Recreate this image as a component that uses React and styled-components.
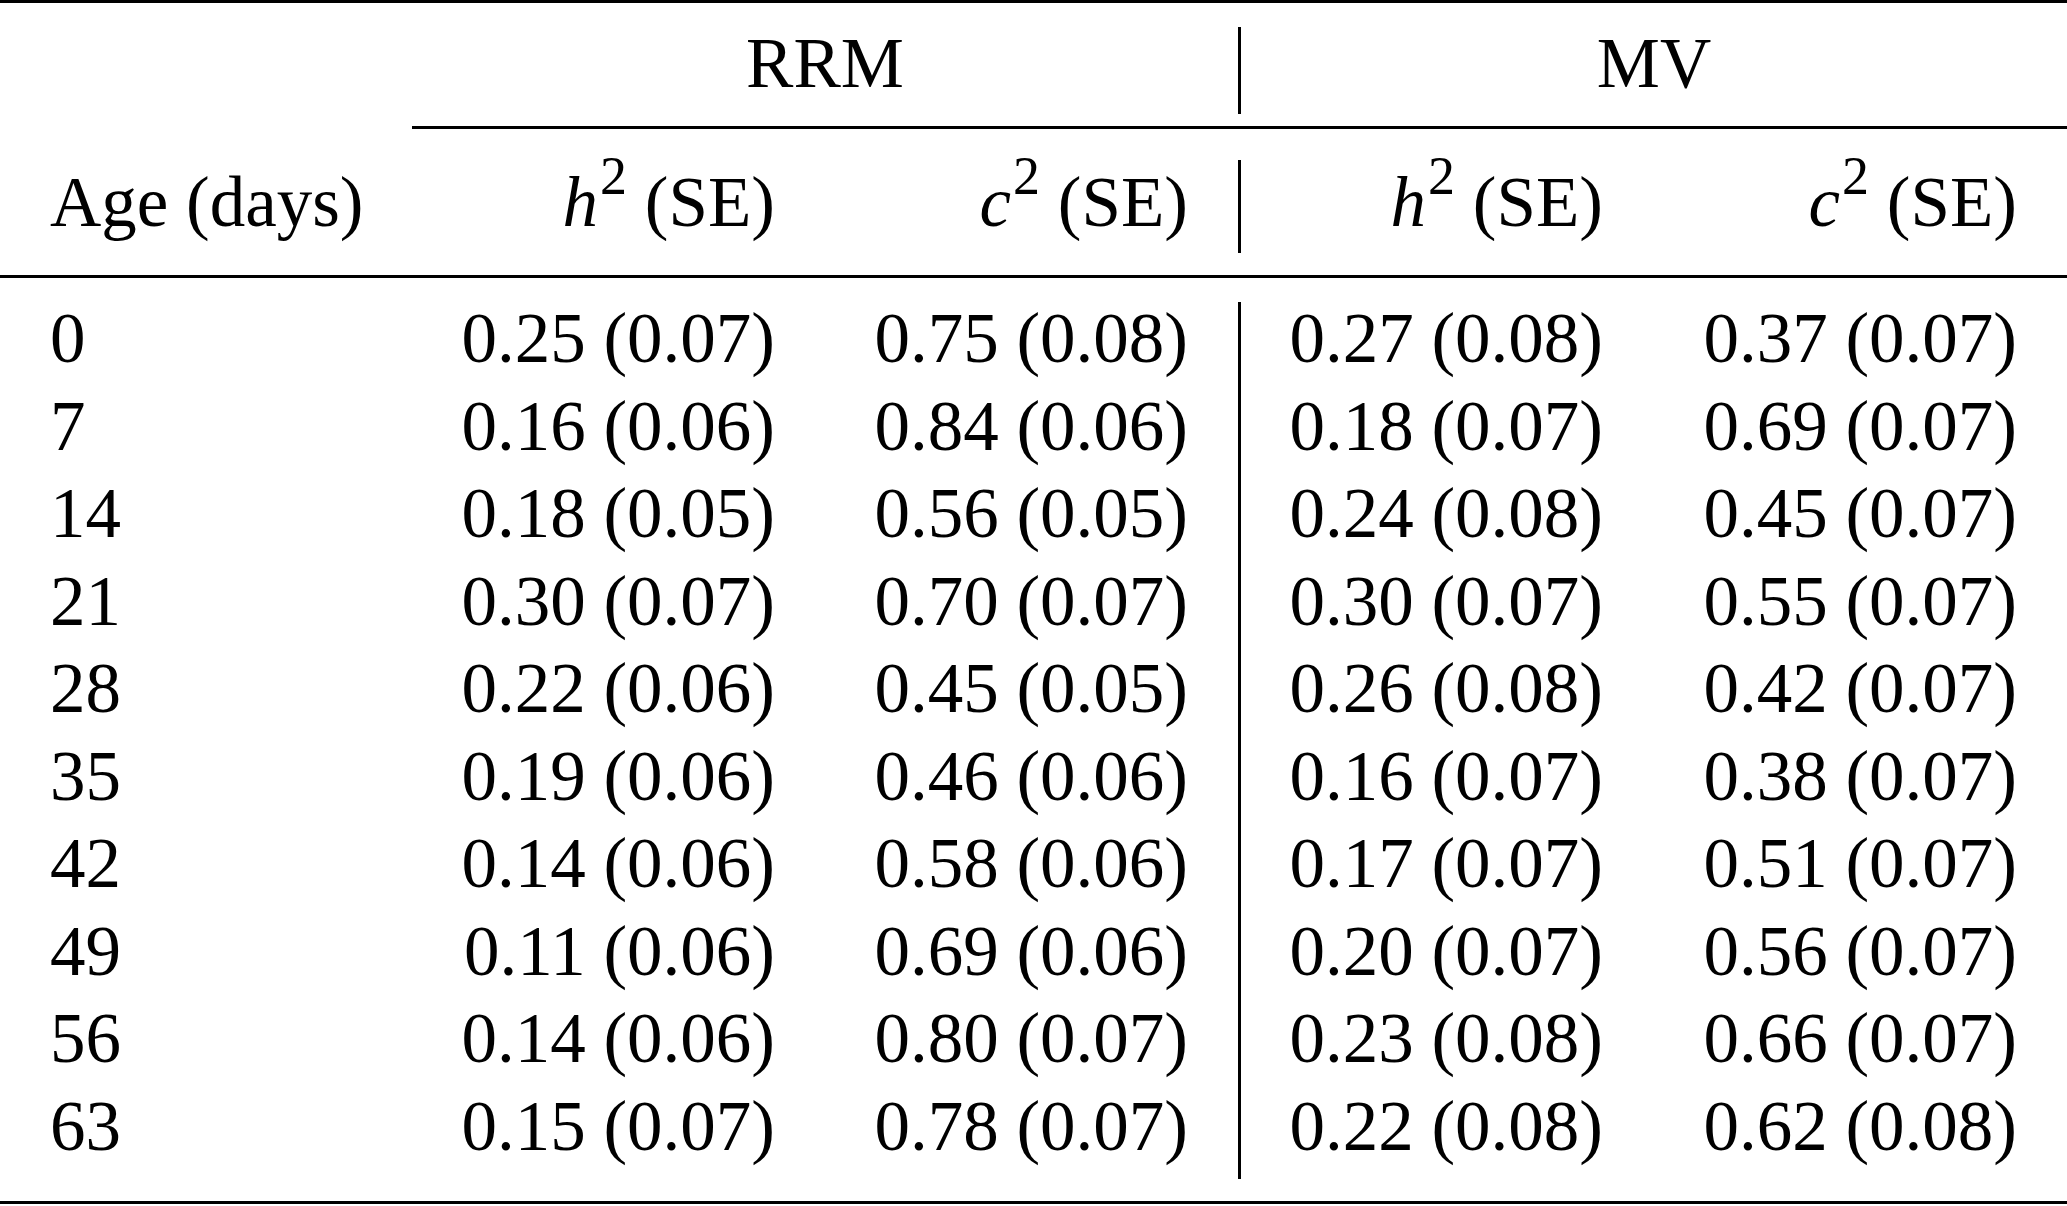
import React from 'react'
import styled, { createGlobalStyle } from 'styled-components'

const GlobalStyle = createGlobalStyle`
    html, body {
        margin: 0;
        padding: 0;
        background-color: #ffffff;
    }
    body {
        width: 2067px;
        height: 1206px;
        overflow: hidden;
    }
`;

const rows = [
    ["0", "0.25 (0.07)", "0.75 (0.08)", "0.27 (0.08)", "0.37 (0.07)"],
    ["7", "0.16 (0.06)", "0.84 (0.06)", "0.18 (0.07)", "0.69 (0.07)"],
    ["14", "0.18 (0.05)", "0.56 (0.05)", "0.24 (0.08)", "0.45 (0.07)"],
    ["21", "0.30 (0.07)", "0.70 (0.07)", "0.30 (0.07)", "0.55 (0.07)"],
    ["28", "0.22 (0.06)", "0.45 (0.05)", "0.26 (0.08)", "0.42 (0.07)"],
    ["35", "0.19 (0.06)", "0.46 (0.06)", "0.16 (0.07)", "0.38 (0.07)"],
    ["42", "0.14 (0.06)", "0.58 (0.06)", "0.17 (0.07)", "0.51 (0.07)"],
    ["49", "0.11 (0.06)", "0.69 (0.06)", "0.20 (0.07)", "0.56 (0.07)"],
    ["56", "0.14 (0.06)", "0.80 (0.07)", "0.23 (0.08)", "0.66 (0.07)"],
    ["63", "0.15 (0.07)", "0.78 (0.07)", "0.22 (0.08)", "0.62 (0.08)"],
];

function App() {
    return (
        <>
            <GlobalStyle />
            <Table>
                <colgroup>
                    <col style={{ width: 412 }} />
                    <col style={{ width: 413 }} />
                    <col style={{ width: 413 }} />
                    <col style={{ width: 3 }} />
                    <col style={{ width: 412 }} />
                    <col style={{ width: 414 }} />
                </colgroup>
                <thead>
                    <tr>
                        <Cell $pt={17}></Cell>
                        <Cell colSpan={2} $align="center" $pt={17} $rule>RRM</Cell>
                        <RuleCell $pt={24} $pb={12} $rule><Bar $h={87} /></RuleCell>
                        <Cell colSpan={2} $align="center" $pt={17} $rule>MV</Cell>
                    </tr>
                    <tr>
                        <Cell $align="left" $pt={30} $rule>Age (days)</Cell>
                        <Cell $pt={30} $rule><Var>h</Var><Sup>2</Sup> (SE)</Cell>
                        <Cell $pt={30} $rule><Var>c</Var><Sup>2</Sup> (SE)</Cell>
                        <RuleCell $pt={31} $pb={22} $rule><Bar $h={93} /></RuleCell>
                        <Cell $pt={30} $rule><Var>h</Var><Sup>2</Sup> (SE)</Cell>
                        <Cell $pt={30} $rule><Var>c</Var><Sup>2</Sup> (SE)</Cell>
                    </tr>
                </thead>
                <tbody>
                    {rows.map((r, i) => {
                        const pt = i === 0 ? 17 : 0;
                        const pb = i === rows.length - 1 ? 31 : 0;
                        return (
                            <tr key={r[0]}>
                                <Cell $align="left" $pt={pt} $pb={pb}>{r[0]}</Cell>
                                <Cell $pt={pt} $pb={pb}>{r[1]}</Cell>
                                <Cell $pt={pt} $pb={pb}>{r[2]}</Cell>
                                {i === 0 && (
                                    <RuleCell rowSpan={rows.length} $pt={24} $pb={22}><Bar $h={877} /></RuleCell>
                                )}
                                <Cell $pt={pt} $pb={pb}>{r[3]}</Cell>
                                <Cell $pt={pt} $pb={pb}>{r[4]}</Cell>
                            </tr>
                        )
                    })}
                </tbody>
            </Table>
        </>
    )
}

const Table = styled.table`
    width: 2067px;
    table-layout: fixed;
    border-collapse: separate;
    border-spacing: 0;
    border-top: 3px solid #000000;
    border-bottom: 3px solid #000000;
    font-family: "Liberation Serif", "Times New Roman", serif;
    font-size: 71px;
    color: #000000;
`;

const Cell = styled.td`
    padding: ${p => p.$pt || 0}px 50px ${p => p.$pb || 0}px ${p => (p.$align === 'right' || !p.$align ? 10 : 50)}px;
    text-align: ${p => p.$align || 'right'};
    vertical-align: top;
    line-height: 87.5px;
    white-space: nowrap;
    border-bottom: ${p => (p.$rule ? '3px solid #000000' : 'none')};
`;

const RuleCell = styled.td`
    padding: ${p => p.$pt}px 0 ${p => p.$pb}px 0;
    vertical-align: top;
    line-height: 0;
    border-bottom: ${p => (p.$rule ? '3px solid #000000' : 'none')};
`;

const Bar = styled.div`
    width: 3px;
    height: ${p => p.$h}px;
    background-color: #000000;
`;

const Var = styled.i`
    font-style: italic;
`;

const Sup = styled.sup`
    font-size: 0.76em;
    line-height: 0;
    vertical-align: 32px;
    margin-left: 2px;
`;

export default App
